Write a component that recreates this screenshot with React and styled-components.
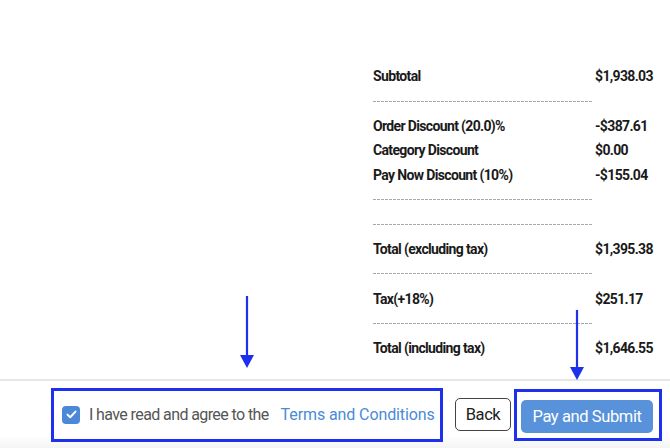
import React from "react";
import styled, { createGlobalStyle } from "styled-components";

const Global = createGlobalStyle`
  html, body { margin: 0; padding: 0; background: #fff; }
  body { font-family: Roboto, "Liberation Sans", Arial, sans-serif; }
  * { box-sizing: border-box; }
`;

const Page = styled.div`
  position: relative;
  width: 670px;
  height: 448px;
  display: flex;
  flex-direction: column;
  overflow: hidden;
`;

const Main = styled.main`
  flex: 1;
  padding: 64px 0 0 373px;
`;

const Summary = styled.div`
  display: grid;
  grid-template-columns: 222px auto;
  grid-auto-rows: 24.7px;
  align-items: center;
  font-size: 14px;
  letter-spacing: -0.65px;
  font-weight: 700;
  color: #1a1a1a;
`;

const Label = styled.div`
  white-space: nowrap;
`;
const Value = styled.div`
  white-space: nowrap;
`;

const Dash = styled.div`
  height: 1px;
  width: 220px;
  background: repeating-linear-gradient(
    90deg,
    #a8a8a8 0 3px,
    transparent 3px 4px
  );
`;

const Spacer = styled.div``;

const Footer = styled.footer`
  height: 69px;
  flex: none;
  border-top: 2px solid #e6e6e6;
  background: linear-gradient(#ffffff 0%, #ffffff 82%, #f4f4f4 100%);
  display: flex;
  align-items: center;
  padding: 0 8px 0 51px;
`;

const Highlight = styled.div`
  flex: none;
  border: 3px solid #1c30ee;
  display: flex;
  align-items: center;
  width: ${(p) => p.$w}px;
  height: ${(p) => p.$h}px;
  padding: ${(p) => p.$pad};
`;

const CheckBox = styled.span`
  width: 18px;
  height: 18px;
  border-radius: 4px;
  background: #4b88d8;
  display: inline-flex;
  align-items: center;
  justify-content: center;
  margin-right: 9px;
  flex: none;
`;

const AgreeText = styled.span`
  font-size: 16px;
  letter-spacing: -0.6px;
  color: #555;
  white-space: nowrap;
`;

const TermsLink = styled.a`
  font-size: 16px;
  letter-spacing: -0.1px;
  color: #4a8ad8;
  margin-left: 12px;
  white-space: nowrap;
  text-decoration: none;
`;

const Button = styled.button`
  flex: none;
  height: 33px;
  border-radius: 5px;
  font-family: Roboto, "Liberation Sans", Arial, sans-serif;
  font-size: 16.5px;
  letter-spacing: -0.4px;
  padding: 0;
  white-space: nowrap;
`;

const BackButton = styled(Button)`
  margin-left: 12px;
  margin-right: 3px;
  width: 56px;
  border: 1px solid #444;
  background: #fff;
  color: #222;
`;

const PayButton = styled(Button)`
  width: 132px;
  border: none;
  background: #5892da;
  color: #fff;
`;

const Arrow = styled.svg`
  position: absolute;
  left: ${(p) => p.$x - 8}px;
  top: ${(p) => p.$y}px;
  width: 16px;
  height: ${(p) => p.$len}px;
`;

const BlueArrow = ({ x, y, len }) => (
  <Arrow $x={x} $y={y} $len={len} viewBox={`0 0 16 ${len}`}>
    <line x1="8" y1="0" x2="8" y2={len - 12} stroke="#1c30ee" strokeWidth="2.2" />
    <polygon points={`1,${len - 13} 15,${len - 13} 8,${len}`} fill="#1c30ee" />
  </Arrow>
);

const rows = [
  ["Subtotal", "$1,938.03"],
  "dash",
  ["Order Discount (20.0)%", "-$387.61"],
  ["Category Discount", "$0.00"],
  ["Pay Now Discount (10%)", "-$155.04"],
  "dash",
  "dash",
  ["Total (excluding tax)", "$1,395.38"],
  "dash",
  ["Tax(+18%)", "$251.17"],
  "dash",
  ["Total (including tax)", "$1,646.55"],
];

export default function App() {
  return (
    <Page>
      <Global />
      <Main>
        <Summary>
          {rows.map((r, i) =>
            r === "dash" ? (
              <React.Fragment key={i}>
                <Dash />
                <Spacer />
              </React.Fragment>
            ) : (
              <React.Fragment key={i}>
                <Label>{r[0]}</Label>
                <Value>{r[1]}</Value>
              </React.Fragment>
            )
          )}
        </Summary>
      </Main>
      <Footer>
        <Highlight $w={392} $h={54} $pad="0 0 0 8px">
          <CheckBox>
            <svg width="11" height="9" viewBox="0 0 11 9">
              <path d="M1.5 4.6 L4.2 7.2 L9.5 1.6" fill="none" stroke="#fff" strokeWidth="2" strokeLinecap="round" strokeLinejoin="round" />
            </svg>
          </CheckBox>
          <AgreeText>I have read and agree to the</AgreeText>
          <TermsLink>Terms and Conditions</TermsLink>
        </Highlight>
        <BackButton>Back</BackButton>
        <Highlight $w={148} $h={52} $pad="3px 0 0 4px">
          <PayButton>Pay and Submit</PayButton>
        </Highlight>
      </Footer>
      <BlueArrow x={247} y={296} len={72} />
      <BlueArrow x={577} y={310} len={70} />
    </Page>
  );
}
